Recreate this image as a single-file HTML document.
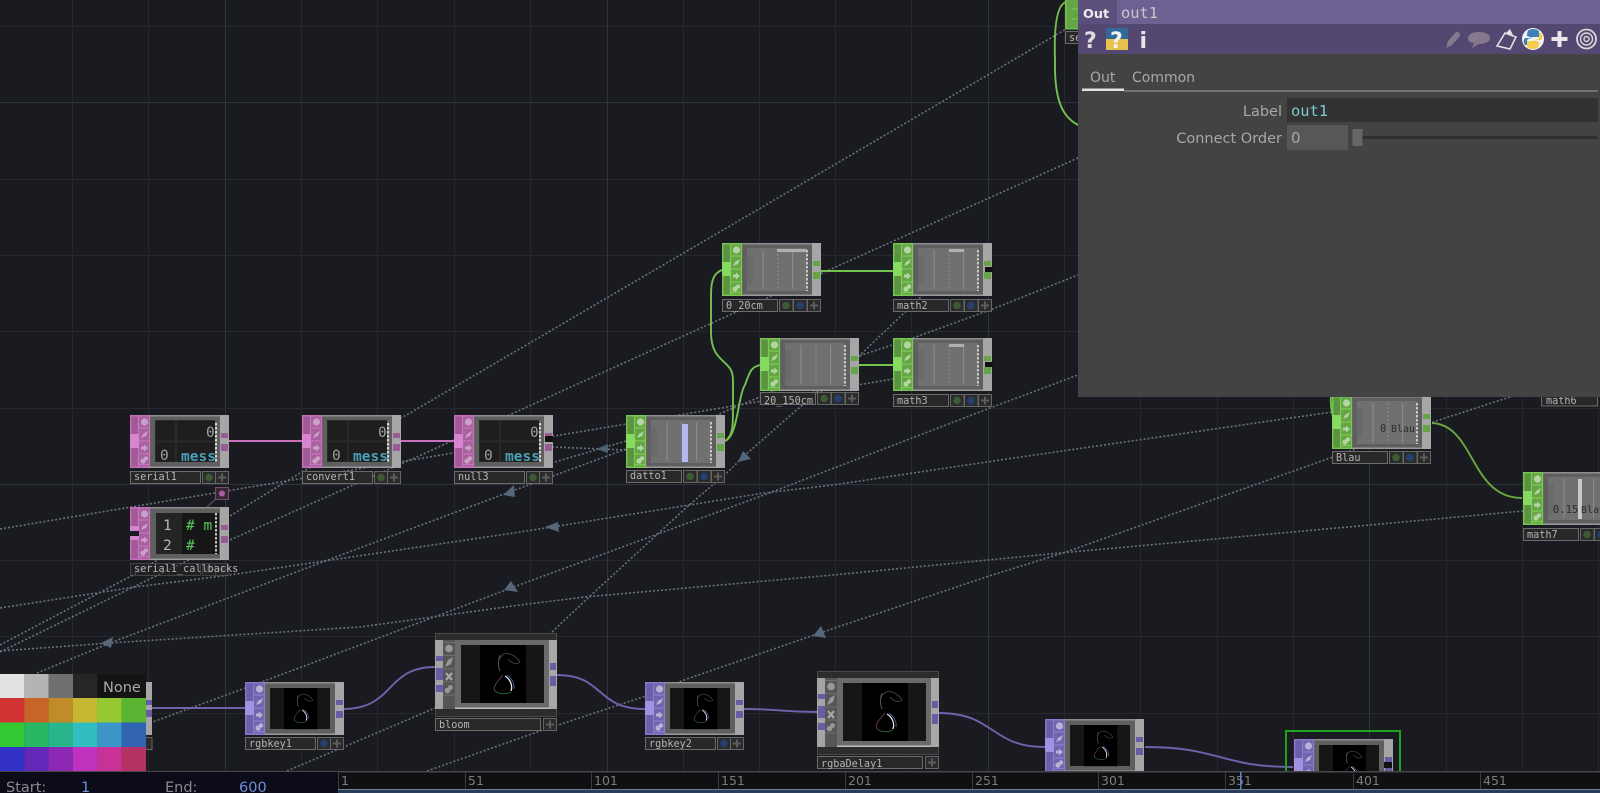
<!DOCTYPE html>
<html><head><meta charset="utf-8"><title>Network</title>
<style>
html,body{margin:0;padding:0;background:#1a1b20;width:1600px;height:793px;overflow:hidden}
svg{display:block;position:absolute;left:0;top:0;filter:blur(.35px)}
.l{font:10.2px "DejaVu Sans Mono","Liberation Mono",monospace;fill:#b4b4b4}
.u{font:14px "DejaVu Sans","Liberation Sans",sans-serif;fill:#a8a8a8}
.t{font:12.5px "DejaVu Sans","Liberation Sans",sans-serif;fill:#7c7c7c}
.m{font:14.5px "DejaVu Sans Mono","Liberation Mono",monospace}
.d{fill:none;stroke:#6a717b;stroke-width:1.6;stroke-dasharray:2 2}
.w{fill:none;stroke-width:1.9}
.pk{--s:#a05a96;--c:#a8609e;--b:#c874be;--h:#d884d0;--o:#9a5a94;--i:#c8a2c4}
.gr{--s:#5a9440;--c:#66a546;--b:#7cca56;--h:#86da60;--o:#66a546;--i:#b4d4a4}
.pu{--s:#6c5ea8;--c:#7264ae;--b:#8a7ccc;--h:#a092e0;--o:#6a5ca4;--i:#b8b2d4}
</style></head><body>
<svg width="1600" height="793" viewBox="0 0 1600 793" xmlns="http://www.w3.org/2000/svg">
<defs>
<g id="icons">
 <circle cx="14.5" cy="7" r="3.6" fill="var(--i)"/>
 <path d="M11 23l2-4 5-3-2 5z" fill="var(--i)"/>
 <path d="M11 31.500h3v-2l4 3.500-4 3.500v-2h-3z" fill="var(--i)"/>
 <circle cx="13" cy="46" r="2.600" fill="var(--i)"/><circle cx="16" cy="43.500" r="2.200" fill="var(--i)"/>
</g>
<g id="n">
 <rect width="99" height="53" fill="#5f5f5f"/>
 <rect width="99" height="1.500" fill="#8e8e8e"/><rect y="51.500" width="99" height="1.500" fill="#9a9a9a"/>
 <rect x="90" width="9" height="53" fill="#a6a6a6"/>
 <rect x="91" y="18" width="7" height="5" fill="var(--o)"/><rect x="91" y="29" width="7" height="7" fill="var(--o)"/>
 <rect width="8.500" height="53" fill="var(--s)"/>
 <rect x="8.500" width="11.500" height="53" fill="var(--c)"/>
 <path d="M.75 0V53M.75.75H20M.75 52.250H20M8.500 0V53M19.500 0V53M8.500 13H20M8.500 26H20M8.500 39H20M8.500 49.500H20" stroke="var(--b)" stroke-width="1.200" fill="none"/>
 <rect y="19" width="9" height="14" fill="var(--h)"/>
 <use href="#icons"/>
</g>
<g id="lab2">
 <rect x=".5" y="56.500" width="70" height="12" fill="#282828" stroke="#6c6c6c"/>
 <rect x="72.500" y="56.500" width="13" height="12" fill="#2b2b2b" stroke="#666"/>
 <circle cx="79" cy="62.500" r="3.800" fill="#3d5a34"/>
 <rect x="85.500" y="56.500" width="13" height="12" fill="#2b2b2b" stroke="#666"/>
 <path d="M92 58.500v8M88 62.500h8" stroke="#5c5c5c" stroke-width="2"/>
</g>
<g id="labt">
 <rect x=".5" y="56.500" width="70" height="12" fill="#282828" stroke="#6c6c6c"/>
 <rect x="72.500" y="56.500" width="13" height="12" fill="#2b2b2b" stroke="#666"/>
 <circle cx="79" cy="62.500" r="3.800" fill="#26406e"/>
 <rect x="85.500" y="56.500" width="13" height="12" fill="#2b2b2b" stroke="#666"/>
 <path d="M92 58.500v8M88 62.500h8" stroke="#5c5c5c" stroke-width="2"/>
</g>
<g id="lab3">
 <rect x=".5" y="56.500" width="55" height="12" fill="#282828" stroke="#6c6c6c"/>
 <rect x="57.500" y="56.500" width="13.500" height="12" fill="#2b2b2b" stroke="#666"/>
 <circle cx="64" cy="62.500" r="3.800" fill="#3d5a34"/>
 <rect x="71.500" y="56.500" width="13.500" height="12" fill="#2b2b2b" stroke="#666"/>
 <circle cx="78" cy="62.500" r="3.800" fill="#26406e"/>
 <rect x="85.500" y="56.500" width="13" height="12" fill="#2b2b2b" stroke="#666"/>
 <path d="M92 58.500v8M88 62.500h8" stroke="#5c5c5c" stroke-width="2"/>
</g>
<g id="chop">
 <rect x="25" y="5" width="60" height="43" fill="#707070"/>
 <rect x="25" y="12" width="6" height="30" fill="#6a6a6a"/>
 <rect x="40.500" y="7" width="1.200" height="39" fill="#8a8a8a"/>
 <path d="M56 7V46" stroke="#8a8a8a" stroke-width="1.200" stroke-dasharray="2 2"/>
 <rect x="70" y="7" width="1.200" height="39" fill="#8a8a8a"/>
 <path d="M85 7V48" stroke="#fff" stroke-width="1.300" stroke-dasharray="2.500 1.500"/>
</g>
<g id="dat">
 <rect x="25" y="5" width="60" height="42" fill="#2a2a2a"/>
 <rect x="26" y="6" width="19" height="19.500" fill="#1e1e1e"/><rect x="47" y="6" width="38" height="19.500" fill="#1e1e1e"/>
 <rect x="26" y="27.500" width="19" height="19" fill="#1e1e1e"/><rect x="47" y="27.500" width="38" height="19" fill="#1e1e1e"/>
 <path d="M86 8V47" stroke="#fff" stroke-width="1.500" stroke-dasharray="2.500 1.500"/>
</g>
<g id="s">
 <rect width="46" height="58" fill="#000"/>
 <path d="M20 26C17 20 18 12 24 9 30 7 37 12 40 17 37 20 31 18 28 14" fill="none" stroke="#4e4e4e" stroke-width=".8"/>
 <path d="M20 10C18 14 18 22 20 26" fill="none" stroke="#6a4a5a" stroke-width=".9"/>
 <path d="M25 31C30 34 33 40 31 46" fill="none" stroke="#e8e8e8" stroke-width="1.300"/>
 <path d="M23 30C18 36 12 42 15 46" fill="none" stroke="#6a3a62" stroke-width=".9"/>
 <path d="M15 46C20 50 27 49 31 47" fill="none" stroke="#2a6a3a" stroke-width=".9"/>
 <path d="M27 30C31 33 35 38 34 44" fill="none" stroke="#4a66a8" stroke-width=".9"/>
</g>
<g id="top">
 <rect x="25" y="6" width="60" height="41" fill="#161616"/>
 <use href="#s" transform="translate(39,6) scale(.72,.71)"/>
</g>
<g id="bt">
 <rect x=".5" y=".5" width="121" height="83" fill="#2c2c2c" stroke="#4a4a4a"/>
 <rect y="7" width="122" height="69" fill="#6a6a6a"/>
 <rect y="74.500" width="122" height="1.500" fill="#bcbcbc"/>
 <rect y="7" width="8" height="69" fill="#a4a4a4"/>
 <rect x="8" y="7" width="12" height="69" fill="#565656"/>
 <path d="M8 9.500H20M8 22.500H20M8 36H20M8 49H20M8 62H20" stroke="#6e6e6e"/>
 <circle cx="14" cy="15.500" r="3.800" fill="#989898"/>
 <path d="M10 34l3-7 5-3-2 7z" fill="#989898"/>
 <path d="M11 39l6 7M17 39l-6 7" stroke="#a8a8a8" stroke-width="2.200" transform="translate(0,1)"/>
 <circle cx="12.500" cy="57.500" r="2.800" fill="#989898"/><circle cx="15.500" cy="54.500" r="2.400" fill="#989898"/>
 <rect x="114" y="7" width="8" height="69" fill="#a8a8a8"/>
 <rect x="115" y="30" width="6" height="7" fill="#6a5ca4"/><rect x="115" y="43" width="6" height="10" fill="#6a5ca4"/>
 <rect x="1" y="23" width="7" height="5" fill="#6a5ca4"/><rect x="1" y="35" width="7" height="12" fill="#6a5ca4"/><rect x="1" y="52" width="7" height="7" fill="#6a5ca4"/>
 <rect x="26" y="12" width="83" height="58" fill="#161616"/>
 <use href="#s" x="45" y="12"/>
 <rect x=".5" y="85.500" width="105" height="12" fill="#282828" stroke="#6c6c6c"/>
 <rect x="108.500" y="85.500" width="13" height="12" fill="#2b2b2b" stroke="#666"/>
 <path d="M115 87.500v8M111 91.500h8" stroke="#5c5c5c" stroke-width="2"/>
</g>
<clipPath id="cb"><rect x="0" y="0" width="1600" height="772"/></clipPath>
<clipPath id="cc"><rect x="130" y="507" width="88" height="52"/></clipPath>
<clipPath id="c7"><rect x="1523" y="472" width="77" height="53"/></clipPath>
<clipPath id="py"><circle cx="1533" cy="39" r="10"/></clipPath>
</defs>

<rect width="1600" height="793" fill="#1a1b20"/>
<!-- grid -->
<path d="M72.500 0V772M148.500 0V772M301.500 0V772M377.500 0V772M454.500 0V772M530.500 0V772M683.500 0V772M759.500 0V772M835.500 0V772M911.500 0V772M1064.500 0V772M1140.500 0V772M1217.500 0V772M1293.500 0V772M1446.500 0V772M1522.500 0V772M1598.500 0V772M0 26.500H1600M0 179.500H1600M0 255.500H1600M0 331.500H1600M0 408.500H1600M0 560.500H1600M0 636.500H1600M0 713.500H1600" stroke="#26282e" fill="none"/>
<path d="M225.500 0V772M607.500 0V772M988.500 0V772M1369.500 0V772M0 102.500H1600M0 484.500H1600" stroke="#31333b" fill="none"/>

<!-- dotted wires -->
<g class="d">
 <path class="d" d="M0 529L626 424L893 379"/>
 <path class="d" d="M0 645L133 575L230 516L300 473L410 413L723 230L945 100L1078 22"/>
 <path class="d" d="M0 652L230 540L360 482L410 460L820 274L1078 158"/>
 <path class="d" d="M0 608L135 587L230 575L520 532L552 527L764 493L833 485L1000 460L1332 412"/>
 <path class="d" d="M0 651L110 643L360 627L520 605L585 597L833 575L1060 553L1370 525L1523 511"/>
 <path class="d" d="M37 673L110 643L333 558L507 493L626 449"/>
 <path class="d" d="M150 723L267 680L519 585L764 495L990 408L1078 375"/>
 <path class="d" d="M287 771L400 723L435 708L457 698"/>
 <path class="d" d="M427 771L543 730L643 697L684 680L820 633L986 577L1066 552L1330 458L1430 423L1510 397"/>
 <path class="d" d="M552 632L588 598L687 507L730 470L743 457L800 407L858 357L925 293"/>
 <path class="d" d="M687 430L724 412L853 358L913 338L990 310L1078 275"/>
 <path class="d" d="M552 447L626 450"/>
 <path class="d" d="M555 462L626 441"/>
</g>
<path d="M206 508L219 496" stroke="#4c4c50" fill="none" stroke-width="1.400"/>
<!-- arrowheads -->
<g fill="#55677a">
 <path d="M101 643L113 637L111 648z"/>
 <path d="M503 495L514 485L515 497z"/>
 <path d="M545 527L558 522L559 532z"/>
 <path d="M504 590L511 581L518 592z"/>
 <path d="M738 462L743 451L751 459z"/>
 <path d="M813 636L821 626L826 638z"/>
 <path d="M596 449L608 444L608 453z" fill="#4e5f70"/>
</g>

<!-- solid wires -->
<g class="w" stroke="#c870bc">
 <path d="M229 441H302M401 441H454"/>
</g>
<g class="w" stroke="#74c24e">
 <path d="M725 441C733 436 733 425 733 410L733 380C733 358 711 365 711 332L711 295C711 280 714 273 722 270"/>
 <path d="M725 441C738 436 738 395 745 385C750 370 752 367 760 365"/>
 <path d="M820 271H893"/>
 <path d="M859 365H893"/>
 <path d="M1066 2C1056 5 1054 30 1055 60C1054 105 1065 118 1078 125"/>
 <path d="M1331 395C1330 405 1332 412 1334 421"/>
</g>
<path class="w" stroke="#69a63e" d="M1432 423C1475 425 1470 498 1522 498"/>
<g class="w" stroke="#7062aa">
 <path d="M152 708H245"/>
 <path d="M343 709C395 709 385 667 435 667"/>
 <path d="M557 675C605 675 595 709 645 709"/>
 <path d="M744 709C780 709 780 712 817 712"/>
 <path d="M939 713C995 713 990 747 1045 747"/>
 <path d="M1145 747C1220 747 1220 767 1293 767"/>
</g>

<!-- Pink DAT nodes -->
<g class="pk">
 <use href="#n" x="130" y="415"/><use href="#dat" x="130" y="415"/><use href="#lab2" x="130" y="415"/>
 <use href="#n" x="302" y="415"/><use href="#dat" x="302" y="415"/><use href="#lab2" x="302" y="415"/>
 <use href="#n" x="454" y="415"/><use href="#dat" x="454" y="415"/><use href="#lab2" x="454" y="415"/>
 <use href="#n" x="130" y="507"/><use href="#lab2" x="130" y="507" opacity=".5"/>
 <rect x="130" y="531" width="9" height="5" fill="#1a1b20"/>
 <rect x="156" y="513" width="63" height="41" fill="#161616"/>
 <rect x="156" y="513" width="26" height="41" fill="#242424"/>
 <path d="M216 513V554" stroke="#fff" stroke-width="1.500" stroke-dasharray="2.500 1.500"/>
 <rect x="545" y="436" width="8" height="6" fill="#111"/>
</g>
<rect x="215.500" y="487.500" width="13" height="12" fill="#352a34" stroke="#7a4a74"/>
<circle cx="222" cy="493.500" r="3" fill="#a85ca0"/>
<g class="m" fill="#a0a0a0">
 <text x="206" y="437">0</text><text x="378" y="437">0</text><text x="530" y="437">0</text>
 <text x="160" y="460">0</text><text x="332" y="460">0</text><text x="484" y="460">0</text>
 <text x="181" y="461" fill="#4aa0b8" font-weight="bold">mess</text>
 <text x="353" y="461" fill="#4aa0b8" font-weight="bold">mess</text>
 <text x="505" y="461" fill="#4aa0b8" font-weight="bold">mess</text>
 <text x="163" y="530" fill="#b8b8b8">1</text><text x="163" y="550" fill="#b8b8b8">2</text>
 <text x="186" y="530" fill="#5ac85a" clip-path="url(#cc)">#  m</text><text x="186" y="550" fill="#5ac85a">#</text>
</g>
<g class="l">
 <text x="134" y="480">serial1</text><text x="306" y="480">convert1</text><text x="458" y="480">null3</text>
 <text x="134" y="572">serial1_callbacks</text>
</g>

<!-- Green CHOP nodes -->
<g class="gr">
 <use href="#n" x="626" y="415"/><use href="#chop" x="626" y="415"/><use href="#lab3" x="626" y="414"/>
 <rect x="682" y="424" width="6" height="38" fill="#b8b8f0"/>
 <use href="#n" x="722" y="243"/><use href="#chop" x="722" y="243"/><use href="#lab3" x="722" y="243"/>
 <rect x="777" y="249" width="30" height="3" fill="#b0b0b0"/>
 <use href="#n" x="893" y="243"/><use href="#chop" x="893" y="243"/><use href="#lab3" x="893" y="243"/>
 <rect x="949" y="249" width="15" height="3" fill="#b0b0b0"/>
 <use href="#n" x="760" y="338"/><use href="#chop" x="760" y="338"/><use href="#lab3" x="760" y="336"/>
 <use href="#n" x="893" y="338"/><use href="#chop" x="893" y="338"/><use href="#lab3" x="893" y="338"/>
 <rect x="949" y="344" width="15" height="3" fill="#b0b0b0"/>
 <use href="#n" x="1332" y="396"/><use href="#chop" x="1332" y="396"/><use href="#lab3" x="1332" y="395"/>
 <use href="#n" x="1523" y="472"/><use href="#chop" x="1523" y="472"/><use href="#lab3" x="1523" y="472"/>
 <rect x="1578" y="479" width="4" height="40" fill="#c8c8c8"/>
 <rect x="985" y="267" width="8" height="5" fill="#111"/>
 <rect x="985" y="362" width="8" height="5" fill="#111"/>
</g>
<g class="l">
 <text x="630" y="479">datto1</text><text x="726" y="309">0_20cm</text><text x="897" y="309">math2</text>
 <text x="764" y="404">20_150cm</text><text x="897" y="404">math3</text>
 <text x="1336" y="461">Blau</text><text x="1527" y="538">math7</text>
 <rect x="1541.500" y="390" width="56" height="16" fill="#282828" stroke="#6c6c6c"/>
 <text x="1546" y="404">math6</text>
 <text x="1380" y="432" fill="#2c2c2c" style="font-size:10.500px">0</text><text x="1391" y="432" fill="#2c2c2c" style="font-size:10px">Blau</text>
 <text x="1553" y="513" fill="#2c2c2c" style="font-size:10.500px" clip-path="url(#c7)">0.15</text><text x="1581" y="513" fill="#2c2c2c" style="font-size:10px" clip-path="url(#c7)">Blau</text>
</g>

<!-- Purple TOP nodes -->
<g class="pu" clip-path="url(#cb)">
 <use href="#n" x="245" y="682"/><use href="#top" x="245" y="682"/><use href="#labt" x="245" y="681"/>
 <use href="#n" x="645" y="682"/><use href="#top" x="645" y="682"/><use href="#labt" x="645" y="681"/>
 <use href="#n" x="1045" y="719"/><use href="#top" x="1045" y="719"/>
 <use href="#n" x="1294" y="739"/><use href="#top" x="1294" y="739"/>
 <rect x="1384" y="762" width="8" height="6" fill="#111"/>
 <path d="M1286 772V731H1400V772" fill="none" stroke="#1ea31e" stroke-width="2"/>
</g>
<use href="#bt" x="435" y="633"/>
<use href="#bt" x="817" y="671"/>
<g class="l">
 <text x="249" y="747">rgbkey1</text><text x="649" y="747">rgbkey2</text>
 <text x="439" y="728">bloom</text><text x="821" y="767">rgbaDelay1</text>
</g>

<!-- Node behind palette -->
<rect x="140" y="682" width="12" height="53" fill="#a6a6a6"/>
<rect x="146" y="700" width="6" height="5" fill="#6a5ca4"/><rect x="146" y="710" width="6" height="7" fill="#6a5ca4"/>
<rect x="140" y="737.500" width="12" height="12" fill="#2b2b2b" stroke="#666"/>

<!-- Palette -->
<g>
 <rect x="0" y="674" width="24.400" height="24.500" fill="#e2e2e2"/><rect x="24.300" y="674" width="24.400" height="24.500" fill="#b4b4b4"/><rect x="48.600" y="674" width="24.400" height="24.500" fill="#707070"/><rect x="73" y="674" width="24.400" height="24.500" fill="#262626"/><rect x="97.300" y="674" width="48.700" height="24.500" fill="#141414"/>
 <rect x="0" y="698" width="24.400" height="24.500" fill="#d23434"/><rect x="24.300" y="698" width="24.400" height="24.500" fill="#c86428"/><rect x="48.600" y="698" width="24.400" height="24.500" fill="#bf8c28"/><rect x="73" y="698" width="24.400" height="24.500" fill="#c6b832"/><rect x="97.300" y="698" width="24.400" height="24.500" fill="#96c832"/><rect x="121.600" y="698" width="24.400" height="24.500" fill="#5ab432"/>
 <rect x="0" y="722.500" width="24.400" height="24.500" fill="#32c832"/><rect x="24.300" y="722.500" width="24.400" height="24.500" fill="#28b864"/><rect x="48.600" y="722.500" width="24.400" height="24.500" fill="#28b48c"/><rect x="73" y="722.500" width="24.400" height="24.500" fill="#32bebe"/><rect x="97.300" y="722.500" width="24.400" height="24.500" fill="#3c96c8"/><rect x="121.600" y="722.500" width="24.400" height="24.500" fill="#3264b4"/>
 <rect x="0" y="747" width="24.400" height="25" fill="#3232c8"/><rect x="24.300" y="747" width="24.400" height="25" fill="#6428b8"/><rect x="48.600" y="747" width="24.400" height="25" fill="#8c28b4"/><rect x="73" y="747" width="24.400" height="25" fill="#be32be"/><rect x="97.300" y="747" width="24.400" height="25" fill="#c83296"/><rect x="121.600" y="747" width="24.400" height="25" fill="#b43264"/>
 <text x="103" y="692" font-family="'DejaVu Sans','Liberation Sans',sans-serif" font-size="14.500" fill="#a8a8b0">None</text>
</g>

<!-- Timeline -->
<rect x="0" y="771" width="1600" height="22" fill="#101012"/>
<rect x="0" y="771" width="1600" height="1.500" fill="#48484c"/>
<rect x="0" y="772" width="338" height="21" fill="#0c0b18"/>
<rect x="338" y="789" width="1262" height="1" fill="#6e7f99"/>
<rect x="338" y="790" width="1262" height="3" fill="#2b3d58"/>
<path d="M338.500 772V789M465.500 772V789M591.500 772V789M718.500 772V789M845.500 772V789M972.500 772V789M1098.500 772V789M1225.500 772V789M1353.500 772V789M1480.500 772V789" stroke="#3c3c40"/>
<g class="t">
 <text x="341" y="785">1</text><text x="468" y="785">51</text><text x="594" y="785">101</text><text x="721" y="785">151</text><text x="848" y="785">201</text><text x="975" y="785">251</text><text x="1101" y="785">301</text><text x="1228" y="785">351</text><text x="1356" y="785">401</text><text x="1483" y="785">451</text>
</g>
<rect x="1240" y="772" width="1.500" height="17" fill="#5a88d0"/>
<g font-family="'DejaVu Sans','Liberation Sans',sans-serif" font-size="14.500">
 <text x="6" y="792" fill="#8a8a8a">Start:</text><text x="81" y="792" fill="#6d8fd8">1</text>
 <text x="165" y="792" fill="#8a8a8a">End:</text><text x="239" y="792" fill="#6d8fd8">600</text>
</g>

<!-- Top small node -->
<rect x="1065" y="0" width="13" height="29" fill="#66a546"/>
<path d="M1066 0V29H1078M1072 9H1078M1072 19H1078" stroke="#7cca56" fill="none"/>
<rect x="1065.500" y="31.500" width="14" height="12" fill="#282828" stroke="#6c6c6c"/>
<text class="l" x="1069" y="41">se</text>

<!-- Parameter panel -->
<rect x="1078" y="0" width="522" height="397" fill="#434343"/>
<rect x="1078" y="0" width="522" height="24" fill="#6d6192"/>
<rect x="1078" y="0" width="39" height="24" fill="#5b4f7c"/>
<rect x="1078" y="24" width="522" height="30" fill="#544872"/>
<text x="1083" y="18" font-family="'DejaVu Sans','Liberation Sans',sans-serif" font-size="12.800" font-weight="bold" fill="#ececec">Out</text>
<text x="1121" y="18" class="m" style="font-size:15.400px" fill="#c8c8c8">out1</text>

<g font-family="'DejaVu Sans','Liberation Sans',sans-serif" font-weight="bold">
 <text x="1084" y="48" font-size="22" fill="#dcdcdc">?</text>
 <rect x="1106" y="28" width="22" height="11" fill="#2f6a9a"/>
 <rect x="1106" y="39" width="22" height="11" fill="#e6c24c"/>
 <text x="1110" y="48" font-size="22" fill="#f2f2f2">?</text>
 <text x="1139.500" y="48" font-size="22" fill="#e6e6e6">i</text>
</g>
<!-- pencil -->
<path d="M1446 48L1448 41L1456 32C1458 31 1461 34 1460 36L1452 45z" fill="#85798f"/>
<!-- speech -->
<path d="M1468 39C1468 34 1473 32 1479 32C1485 32 1490 34 1490 38C1490 42 1485 44 1479 44L1472 48L1474 43C1470 43 1468 41 1468 39z" fill="#85798f"/>
<!-- clipboard -->
<path d="M1497 46L1505 33L1516 37L1510 49L1497 46z" fill="none" stroke="#e6e6e6" stroke-width="1.500"/>
<path d="M1506 33L1510 29L1513 35z" fill="#e6e6e6"/>
<!-- python -->
<circle cx="1533" cy="39" r="11" fill="#f2f2f2"/>
<g clip-path="url(#py)">
 <path d="M1527 36C1527 30 1529 29 1533 29C1537 29 1539 30 1539 32V37H1532V38H1539H1526C1523 38 1523 44 1525 45H1527V41C1527 39 1530 38 1533 38" fill="#3d7fb8"/>
 <path d="M1539 42C1539 48 1537 49 1533 49C1529 49 1527 48 1527 46V41H1534V40H1527H1540C1543 40 1543 34 1541 33H1539V37C1539 39 1536 40 1533 40" fill="#f2cc4a"/>
</g>
<!-- plus -->
<path d="M1559.500 31V47M1551.500 39H1567.500" stroke="#e8e8e8" stroke-width="4"/>
<!-- target -->
<circle cx="1586.500" cy="39" r="9.500" fill="none" stroke="#d8d8d8" stroke-width="1.800"/>
<circle cx="1586.500" cy="39" r="6" fill="none" stroke="#d8d8d8" stroke-width="1.400"/>
<circle cx="1586.500" cy="39" r="2.500" fill="none" stroke="#d8d8d8" stroke-width="1.400"/>

<text class="u" x="1090" y="82">Out</text><text class="u" x="1132" y="82">Common</text>
<rect x="1082" y="88.500" width="42" height="2.500" fill="#e2e2e2"/>
<rect x="1124" y="90.500" width="474" height="1" fill="#a0a0a0"/>

<text class="u" x="1282" y="116" text-anchor="end" style="font-size:14.500px">Label</text>
<text class="u" x="1282" y="143" text-anchor="end" style="font-size:14.500px">Connect Order</text>
<rect x="1287" y="98" width="311" height="24" fill="#323232"/>
<text class="m" x="1291" y="116" style="font-size:15.400px" fill="#7ec8d0">out1</text>
<rect x="1287" y="125" width="61" height="25" fill="#575757"/>
<text x="1291" y="143" font-family="'DejaVu Sans','Liberation Sans',sans-serif" font-size="15" fill="#a8a8a8">0</text>
<rect x="1353" y="136" width="245" height="3" fill="#2e2e2e"/>
<rect x="1352.500" y="129" width="10" height="17" fill="#666"/>
</svg>
</body></html>
